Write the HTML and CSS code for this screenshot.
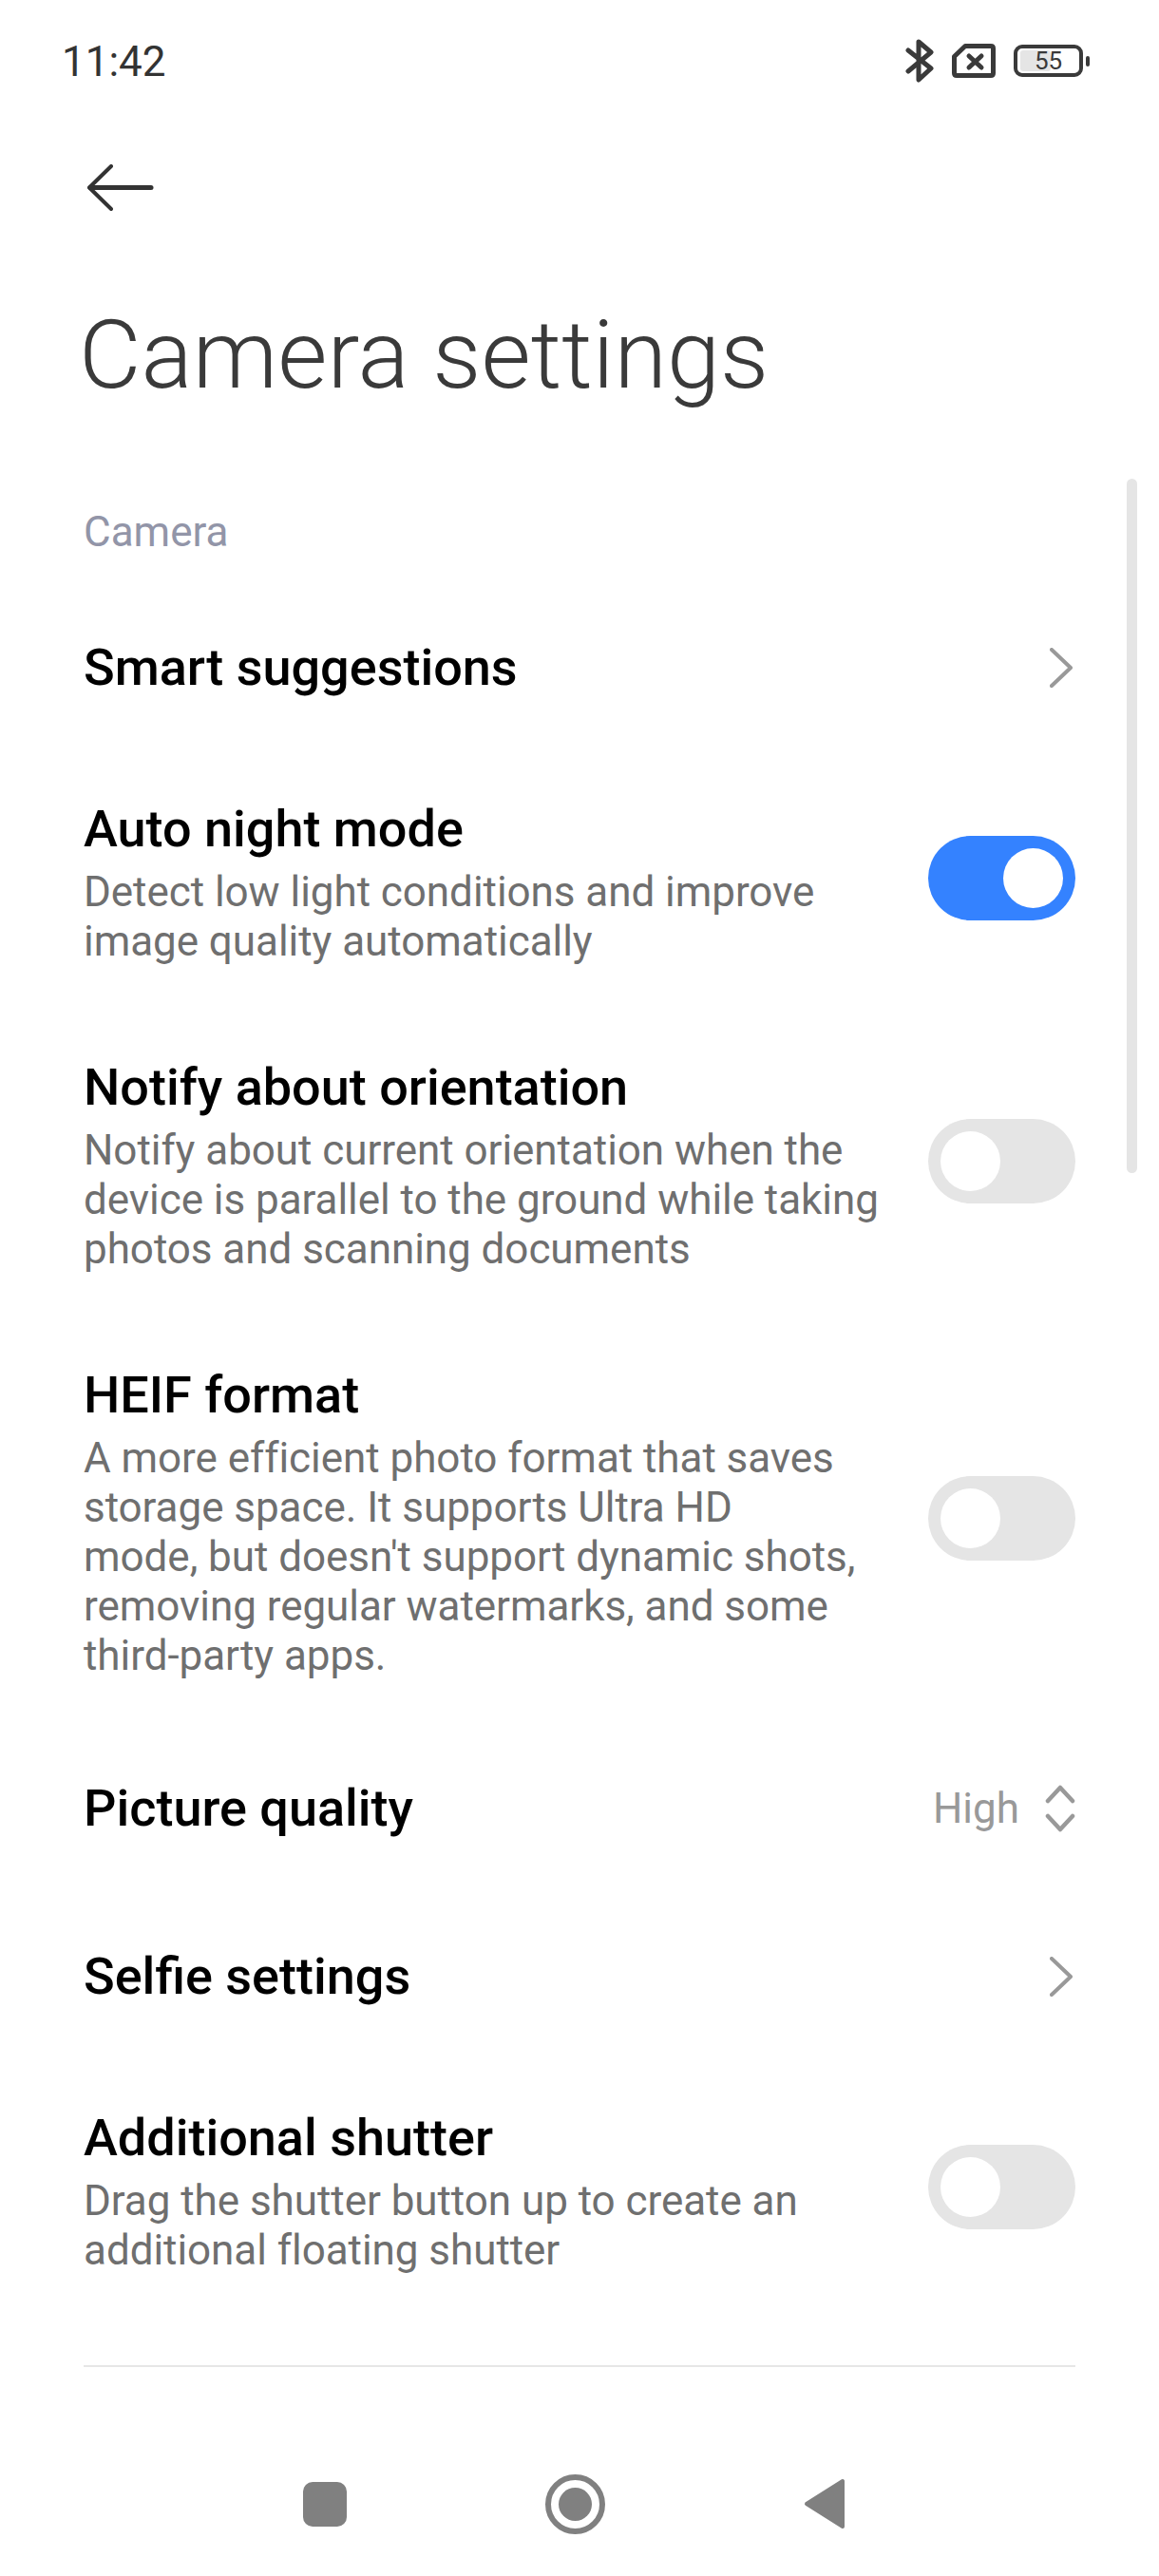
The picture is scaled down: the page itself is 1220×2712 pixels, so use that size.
FILE: index.html
```html
<!DOCTYPE html>
<html lang="en">
<head>
    <meta charset="UTF-8">
    <meta name="viewport" content="width=device-width, initial-scale=1.0">
    <title>Camera settings</title>
    <link rel="stylesheet" href="styles.css">
</head>
<body>
    <div class="status-bar">
        <span class="clock">11:42</span>
        <div class="status-icons">
            <svg class="icon-bt" width="30" height="46" viewBox="0 0 30 46">
                <path d="M3 12 L27 31 L14 43 L14 3 L27 14 L3 34" fill="none" stroke="#3a3a3a" stroke-width="5" stroke-linecap="round" stroke-linejoin="round"/>
            </svg>
            <svg class="icon-sim" width="46" height="36" viewBox="0 0 46 36">
                <path d="M14 2.5 H41 Q43.500 2.500 43.500 5 V31 Q43.500 33.500 41 33.500 H5 Q2.500 33.500 2.500 31 V13.500 Z" fill="none" stroke="#3a3a3a" stroke-width="5" stroke-linejoin="round"/>
                <path d="M18 13 L31 25 M31 13 L18 25" stroke="#3a3a3a" stroke-width="5" stroke-linecap="round"/>
            </svg>
            <div class="battery">
                <div class="battery-body">
                    <div class="battery-fill"></div>
                    <span class="battery-level">55</span>
                </div>
                <div class="battery-tip"></div>
            </div>
        </div>
    </div>

    <div class="toolbar">
        <svg width="72" height="50" viewBox="0 0 72 50">
            <path d="M26 2 L3 24.500 L26 47" fill="none" stroke="#333" stroke-width="4" stroke-linecap="round" stroke-linejoin="round"/>
            <path d="M4 24.500 H68" stroke="#333" stroke-width="5" stroke-linecap="round"/>
        </svg>
    </div>

    <h1 class="page-title">Camera settings</h1>

    <div class="section-label">Camera</div>

    <div class="settings-list">
        <div class="row row-single">
            <div class="row-title">Smart suggestions</div>
            <svg class="chevron" width="24" height="42" viewBox="0 0 24 42">
                <path d="M2 2 L22 21 L2 40" fill="none" stroke="#999" stroke-width="4" stroke-linecap="round" stroke-linejoin="round"/>
            </svg>
        </div>

        <div class="row">
            <div class="row-text">
                <div class="row-title">Auto night mode</div>
                <div class="row-desc">Detect low light conditions and improve<br>image quality automatically</div>
            </div>
            <div class="switch switch-on"><div class="knob"></div></div>
        </div>

        <div class="row">
            <div class="row-text">
                <div class="row-title">Notify about orientation</div>
                <div class="row-desc">Notify about current orientation when the<br>device is parallel to the ground while taking<br>photos and scanning documents</div>
            </div>
            <div class="switch"><div class="knob"></div></div>
        </div>

        <div class="row">
            <div class="row-text">
                <div class="row-title">HEIF format</div>
                <div class="row-desc">A more efficient photo format that saves<br>storage space. It supports Ultra HD<br>mode, but doesn't support dynamic shots,<br>removing regular watermarks, and some<br>third-party apps.</div>
            </div>
            <div class="switch"><div class="knob"></div></div>
        </div>

        <div class="row row-single">
            <div class="row-title">Picture quality</div>
            <div class="row-value">
                <span>High</span>
                <svg width="32" height="50" viewBox="0 0 32 50">
                    <path d="M3 17 L16 3 L29 17 M3 33 L16 47 L29 33" fill="none" stroke="#999" stroke-width="4.500" stroke-linecap="round" stroke-linejoin="round"/>
                </svg>
            </div>
        </div>

        <div class="row row-single">
            <div class="row-title">Selfie settings</div>
            <svg class="chevron" width="24" height="42" viewBox="0 0 24 42">
                <path d="M2 2 L22 21 L2 40" fill="none" stroke="#999" stroke-width="4" stroke-linecap="round" stroke-linejoin="round"/>
            </svg>
        </div>

        <div class="row">
            <div class="row-text">
                <div class="row-title">Additional shutter</div>
                <div class="row-desc">Drag the shutter button up to create an<br>additional floating shutter</div>
            </div>
            <div class="switch"><div class="knob"></div></div>
        </div>
    </div>

    <div class="scrollbar"></div>

    <div class="nav-bar">
        <div class="nav-square"></div>
        <div class="nav-home"><div class="nav-home-dot"></div></div>
        <svg width="44" height="54" viewBox="0 0 44 54">
            <path d="M41 3 V51 L3 27 Z" fill="#808080" stroke="#808080" stroke-width="4" stroke-linejoin="round"/>
        </svg>
    </div>
</body>
</html>
```

FILE: styles.css
```css
* {
    box-sizing: border-box;
}

body {
    font-family: Roboto, Arial, sans-serif;
    background-color: #fff;
    margin: 0;
    padding: 0;
    width: 1220px;
    height: 2712px;
    overflow: hidden;
    position: relative;
    display: flex;
    flex-direction: column;
}

.status-bar {
    height: 130px;
    padding: 41px 73px 0 65px;
    display: flex;
    justify-content: space-between;
    align-items: flex-start;
}

.clock {
    font-size: 44px;
    line-height: 48px;
    color: #333;
}

.status-icons {
    display: flex;
    align-items: center;
    gap: 19px;
    height: 46px;
}

.battery {
    display: flex;
    align-items: center;
    gap: 3px;
}

.battery-body {
    position: relative;
    width: 73px;
    height: 34px;
    border: 4px solid #3a3a3a;
    border-radius: 9px;
    display: flex;
    align-items: center;
    justify-content: center;
}

.battery-fill {
    position: absolute;
    left: 3px;
    top: 2px;
    bottom: 2px;
    width: 32px;
    background-color: #e5e5e5;
    border-radius: 3px;
}

.battery-level {
    position: relative;
    font-size: 26px;
    line-height: 26px;
    color: #3a3a3a;
}

.battery-tip {
    width: 4px;
    height: 11px;
    background-color: #3a3a3a;
    border-radius: 2px;
}

.toolbar {
    height: 100px;
    padding: 43px 0 0 91px;
}

.toolbar svg {
    display: block;
}

.page-title {
    margin: 74px 0 0;
    padding-left: 83px;
    font-size: 101px;
    font-weight: 300;
    line-height: 140px;
    color: #3a3a3a;
    height: 226px;
}

.section-label {
    padding-left: 88px;
    font-size: 44px;
    line-height: 60px;
    height: 84px;
    color: #9295a8;
}

.settings-list {
    flex: 1;
    margin: 0 88px;
    border-bottom: 2px solid #e6e6e6;
}

.row {
    display: flex;
    justify-content: space-between;
    align-items: center;
    padding: 52px 0 46px;
}

.row-single {
    height: 177px;
    padding: 0;
}

.row-title {
    font-size: 54px;
    font-weight: 500;
    line-height: 60px;
    color: #000;
}

.row-desc {
    margin-top: 10px;
    font-size: 44px;
    line-height: 52px;
    letter-spacing: -0.05px;
    color: #6f6f6f;
}

.switch {
    width: 155px;
    height: 89px;
    padding: 13px;
    border-radius: 45px;
    background-color: #e5e5e5;
    margin-bottom: 11px;
    display: flex;
    flex-shrink: 0;
}

.switch-on {
    background-color: #3482ff;
    justify-content: flex-end;
}

.knob {
    width: 63px;
    height: 63px;
    border-radius: 50%;
    background-color: #fff;
}

.chevron {
    flex-shrink: 0;
    margin-right: 3px;
}

.row-value {
    display: flex;
    align-items: center;
    gap: 27px;
    font-size: 44px;
    color: #999;
}

.scrollbar {
    position: absolute;
    left: 1186px;
    top: 504px;
    width: 11px;
    height: 731px;
    border-radius: 6px;
    background-color: #e5e5e5;
}

.nav-bar {
    height: 220px;
    padding: 68px 0 0 319px;
    display: flex;
    align-items: center;
    gap: 209px;
}

.nav-square {
    width: 46px;
    height: 47px;
    border-radius: 10px;
    background-color: #808080;
}

.nav-home {
    width: 63px;
    height: 63px;
    border: 6px solid #808080;
    border-radius: 50%;
    display: flex;
    align-items: center;
    justify-content: center;
}

.nav-home-dot {
    width: 35px;
    height: 35px;
    border-radius: 50%;
    background-color: #808080;
}
```
